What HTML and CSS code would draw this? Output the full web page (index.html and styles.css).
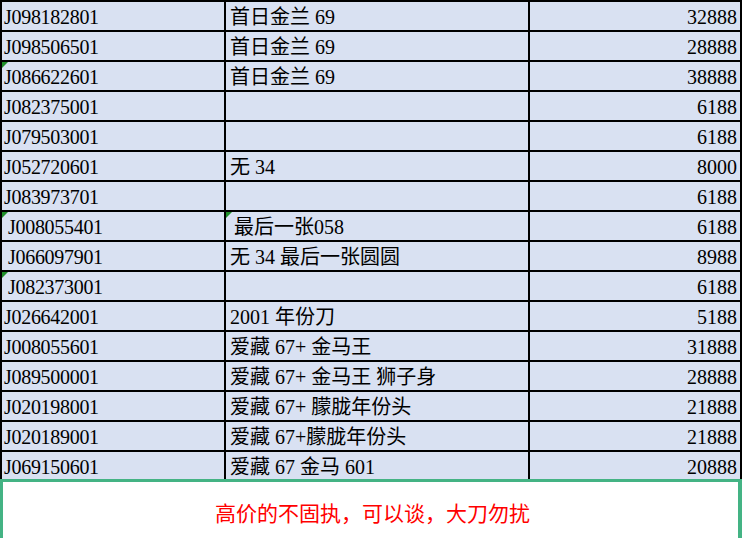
FILE: index.html
```html
<!DOCTYPE html>
<html lang="zh">
<head>
<meta charset="utf-8">
<title>价格表</title>
<link rel="stylesheet" href="styles.css">
</head>
<body>
<div class="sheet">
  <div class="cell">J098182801</div><div class="cell txt">首日金兰 69</div><div class="cell num">32888</div>
  <div class="cell">J098506501</div><div class="cell txt">首日金兰 69</div><div class="cell num">28888</div>
  <div class="cell flag">J086622601</div><div class="cell txt">首日金兰 69</div><div class="cell num">38888</div>
  <div class="cell">J082375001</div><div class="cell txt"></div><div class="cell num">6188</div>
  <div class="cell">J079503001</div><div class="cell txt"></div><div class="cell num">6188</div>
  <div class="cell">J052720601</div><div class="cell txt">无 34</div><div class="cell num">8000</div>
  <div class="cell">J083973701</div><div class="cell txt"></div><div class="cell num">6188</div>
  <div class="cell flag ind">J008055401</div><div class="cell txt flag ind">最后一张058</div><div class="cell num">6188</div>
  <div class="cell ind">J066097901</div><div class="cell txt">无 34 最后一张圆圆</div><div class="cell num">8988</div>
  <div class="cell flag ind">J082373001</div><div class="cell txt"></div><div class="cell num">6188</div>
  <div class="cell">J026642001</div><div class="cell txt">2001 年份刀</div><div class="cell num">5188</div>
  <div class="cell">J008055601</div><div class="cell txt">爱藏 67+ 金马王</div><div class="cell num">31888</div>
  <div class="cell">J089500001</div><div class="cell txt">爱藏 67+ 金马王 狮子身</div><div class="cell num">28888</div>
  <div class="cell">J020198001</div><div class="cell txt">爱藏 67+ 朦胧年份头</div><div class="cell num">21888</div>
  <div class="cell">J020189001</div><div class="cell txt">爱藏 67+朦胧年份头</div><div class="cell num">21888</div>
  <div class="cell">J069150601</div><div class="cell txt">爱藏 67 金马 601</div><div class="cell num">20888</div>
</div>
<div class="note">高价的不固执，可以谈，大刀勿扰</div>
</body>
</html>
```
FILE: styles.css
```css
html, body {
  margin: 0;
  padding: 0;
  overflow: hidden;
  background: #ffffff;
}

.sheet {
  display: grid;
  grid-template-columns: 222px 302px 210px;
  grid-auto-rows: 28px;
  gap: 2px;
  padding: 2px;
  background: #000000;
  width: 742px;
  box-sizing: border-box;
}

.cell {
  position: relative;
  background: #d9e1f2;
  color: #000000;
  font-family: "Liberation Serif", "Noto Sans CJK SC", serif;
  font-size: 20px;
  letter-spacing: -0.3px;
  line-height: 25px;
  padding: 3px 0 0 2px;
  box-sizing: border-box;
  white-space: nowrap;
  overflow: hidden;
}

.cell.txt {
  padding-left: 4px;
  letter-spacing: 0;
}

.cell.num {
  text-align: right;
  padding-left: 0;
  padding-right: 3px;
  letter-spacing: 0;
}

.cell.ind {
  padding-left: 6px;
}

.cell.txt.ind {
  padding-left: 8px;
}

.cell.flag::before {
  content: "";
  position: absolute;
  top: -1px;
  left: -1px;
  width: 0;
  height: 0;
  border-top: 8px solid #1f8f2a;
  border-right: 8px solid transparent;
}

.note {
  position: relative;
  margin-top: -3px;
  height: 59px;
  box-sizing: border-box;
  border: 3px solid #44b384;
  border-right-width: 4px;
  border-bottom: none;
  background: #ffffff;
  color: #ff0000;
  font-family: "Noto Sans CJK SC", sans-serif;
  font-size: 21px;
  line-height: 28px;
  padding-top: 16px;
  padding-left: 4px;
  text-align: center;
}
```
